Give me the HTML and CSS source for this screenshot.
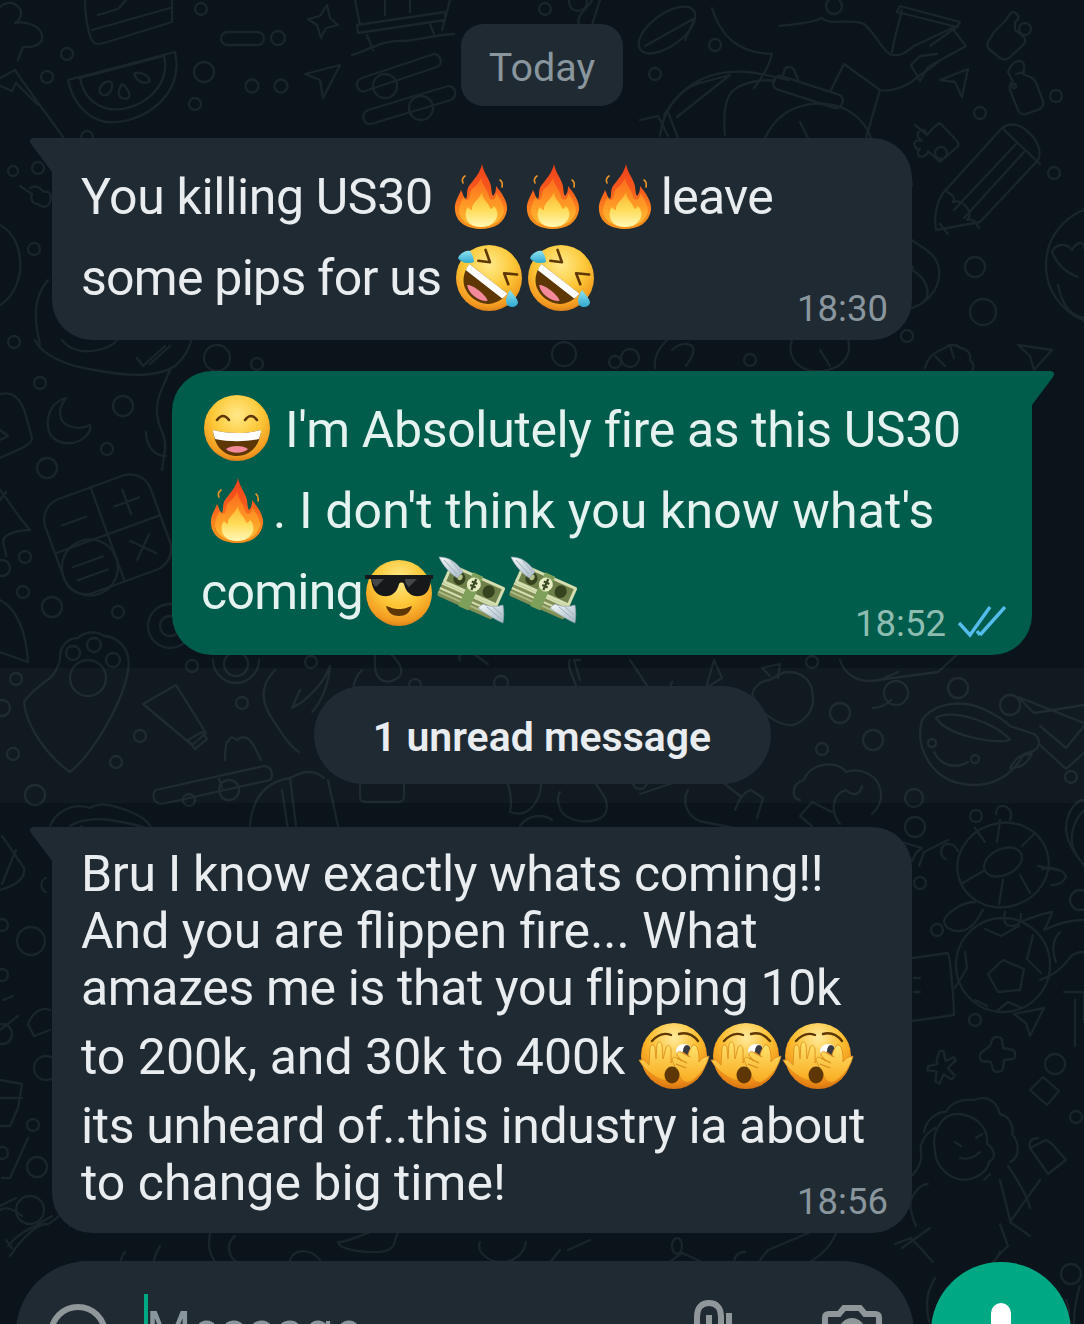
FILE: index.html
```html
<!DOCTYPE html>
<html lang="en">
<head>
<meta charset="utf-8">
<title>Chat</title>
<link rel="stylesheet" href="styles.css">
</head>
<body>
<svg class="sprite" aria-hidden="true">
  <defs>
    <radialGradient id="face" cx="50%" cy="30%" r="74%">
      <stop offset="0" stop-color="#ffe98a"/><stop offset=".5" stop-color="#fdc838"/><stop offset=".85" stop-color="#f29a20"/><stop offset="1" stop-color="#cf7416"/>
    </radialGradient>
    <radialGradient id="facehot" cx="50%" cy="22%" r="84%">
      <stop offset="0" stop-color="#ffeb9c"/><stop offset=".45" stop-color="#fdbd2e"/><stop offset=".8" stop-color="#ef8d18"/><stop offset="1" stop-color="#c9650f"/>
    </radialGradient>
    <linearGradient id="flame" x1="0" y1="0" x2="0" y2="1">
      <stop offset="0" stop-color="#f0401b"/><stop offset=".4" stop-color="#f65a1c"/><stop offset=".75" stop-color="#fb8a20"/><stop offset="1" stop-color="#f2901c"/>
    </linearGradient>
    <linearGradient id="flamemid" x1="0" y1="0" x2="0" y2="1">
      <stop offset="0" stop-color="#fb6a1c"/><stop offset=".6" stop-color="#ff9d26"/><stop offset="1" stop-color="#ffc23a"/>
    </linearGradient>
    <linearGradient id="flamein" x1="0" y1="0" x2="0" y2="1">
      <stop offset="0" stop-color="#ffb32e"/><stop offset=".5" stop-color="#ffdc58"/><stop offset="1" stop-color="#fff8b8"/>
    </linearGradient>
    <linearGradient id="hand" x1="0" y1="0" x2="0" y2="1">
      <stop offset="0" stop-color="#ffe36e"/><stop offset="1" stop-color="#f9aa1f"/>
    </linearGradient>
    <linearGradient id="tear" x1="0" y1="0" x2="0" y2="1">
      <stop offset="0" stop-color="#8fe3ee"/><stop offset="1" stop-color="#2fa8d0"/>
    </linearGradient>
    <linearGradient id="wing" x1="0" y1="0" x2="1" y2="1">
      <stop offset="0" stop-color="#f6fafc"/><stop offset="1" stop-color="#a3b7c3"/>
    </linearGradient>
    <symbol id="e-fire" viewBox="0 0 72 72">
      <path class="spark" d="M18 23q-2-4 2-7M55 20q3 2 2 7"/>
      <path fill="url(#flame)" d="M37 4c2 9 6 13 8 19 2 5 1 10 3 13 3-3 3-7 3-10 6 7 12 16 11 24-2 13-13 19-26 19S11 63 10 50c-1-8 4-14 6-20 2 3 2 7 5 9 2-4 0-9 3-13 4-6 11-12 13-22Z"/>
      <path fill="url(#flamemid)" d="M36 17c1 8 7 13 8 20 1 3 4 4 6 1 1-2 1-3 1-5 4 5 8 12 8 18-2 10-12 16-23 16s-21-6-22-16c0-5 2-10 5-14 1 3 3 4 5 2 2-3 0-6 3-10 3-3 8-6 9-12Z"/>
      <path fill="url(#flamein)" d="M37 32c0 7 6 10 8 16 1 2 3 0 4-2 3 3 4 7 3 11-2 6-8 10-16 10s-14-4-15-10c-1-4 0-7 2-10 1 2 3 3 4 3-1-7 8-11 10-18Z"/>
    </symbol>
    <symbol id="e-rofl" viewBox="0 0 72 72">
      <circle cx="36" cy="37" r="33" fill="url(#face)"/>
      <g transform="rotate(38 36 37)">
        <path fill="#5f3705" d="M12 38h48c0 15-10 25-24 25S12 53 12 38Z"/>
        <path fill="#fff" d="M12 38h48c0 3 0 5-1 7H13c-1-2-1-4-1-7Z"/>
        <path fill="#f28a9c" d="M23 56c4-4 22-4 26 0-7 6-19 6-26 0Z"/>
        <path class="eye" d="M16 17l11 7-10 6M56 17l-11 7 10 6"/>
      </g>
      <path fill="url(#tear)" d="M5 17c2-5 8-8 12-7 2 2 4 8 4 11-6 2-13 1-16-4Z"/>
      <path fill="url(#tear)" d="M57 49c3 4 7 8 8 12 0 3-3 5-6 5s-6-2-6-6 2-8 4-11Z"/>
    </symbol>
    <symbol id="e-grin" viewBox="0 0 72 72">
      <circle cx="36" cy="35" r="33" fill="url(#face)"/>
      <path class="eye" d="M16 27q6-8 12 0M44 27q6-8 12 0"/>
      <path fill="#5f3705" d="M12 37c15 4 33 4 48 0-1 16-11 26-24 26S13 53 12 37Z"/>
      <path fill="#fff" d="M12 37c15 4 33 4 48 0 0 3-1 6-2 9-14 3-30 3-44 0-1-3-2-6-2-9Z"/>
      <path fill="#f28a9c" d="M25 56c5-4 17-4 22 0-5 5-17 5-22 0Z"/>
    </symbol>
    <symbol id="e-cool" viewBox="0 0 72 72">
      <circle cx="36" cy="38" r="33" fill="url(#face)"/>
      <path fill="#17181a" d="M2 20h68v4h-2c-1 8-3 16-11 17-8 1-14-3-16-12-1-2-4-2-5 0-2 9-8 13-16 12-8-1-11-9-12-17H2v-4Z"/>
      <path fill="#44464a" d="M9 24h12l-8 8c-3-2-4-5-4-8ZM42 24h12l-8 8c-3-2-4-5-4-8Z"/>
      <path fill="#5f3705" d="M23 51c9 3 17 3 26 0-2 7-7 10-13 10s-11-3-13-10Z"/>
      <path fill="#fdc838" d="M25 50c7 3 15 3 22 0-2 3-6 4-11 4s-9-1-11-4Z"/>
    </symbol>
    <symbol id="e-money" viewBox="0 0 72 72">
      <g transform="rotate(24 36 37)">
        <rect x="6" y="34" width="60" height="20" rx="2" fill="#7f8f55"/>
        <rect x="6" y="40" width="60" height="2" fill="#d5deb0"/>
        <rect x="6" y="45" width="60" height="2" fill="#d5deb0"/>
        <rect x="6" y="49" width="60" height="2" fill="#aab884"/>
        <rect x="6" y="19" width="60" height="21" rx="2" fill="#d5deb0"/>
        <rect x="9" y="22" width="54" height="15" fill="#6d8049"/>
        <ellipse cx="20" cy="29.500" rx="6" ry="6.500" fill="#35431f"/>
        <ellipse cx="52" cy="29.500" rx="6" ry="6.500" fill="#35431f"/>
        <ellipse cx="20" cy="28" rx="2.500" ry="3" fill="#b6c28e"/>
        <rect x="30" y="18" width="11" height="37" fill="#7fa05a"/>
        <ellipse cx="35.500" cy="29" rx="7" ry="7" fill="#e6ecc4"/>
        <path stroke="#3a4a22" stroke-width="2.200" fill="none" d="M35.500 23v12M32.500 27h6M32.500 31h6"/>
      </g>
      <path fill="url(#wing)" stroke="#8fa3af" stroke-width=".6" d="M4 2c9 0 17 4 24 15l-6 6C15 18 8 11 4 2Z"/>
      <path class="feather" d="M9 5l13 14M16 6l9 10"/>
      <path fill="url(#wing)" stroke="#8fa3af" stroke-width=".6" d="M48 49c6 3 14 3 20 1 1 6 1 12 0 18-7-3-17-9-25-15Z"/>
      <path class="feather" d="M52 52l15 13M58 52l9 8"/>
    </symbol>
    <symbol id="e-hide" viewBox="0 0 72 72">
      <circle cx="36" cy="36" r="33" fill="url(#facehot)"/>
      <path class="brow" d="M14 21q9-10 19-6M41 14q11-3 19 7"/>
      <ellipse cx="46" cy="31" rx="8" ry="7" fill="#fff"/>
      <ellipse cx="49" cy="31" rx="4" ry="6" fill="#3a3a42"/>
      <path class="hand" d="M24 60C13 55 6 49 1 40l5 0 5 5 1-17c1-4 4-4 5 0l1 11 1-14c1-4 4-4 5 0l1 14 3-11c1-4 4-3 5 1v14l3-4c3-2 5 0 4 3l-3 13c-2 5-6 7-8 5Z"/>
      <path class="hand" d="M44 60c-3-5-7-11-8-16l-2-4c0-3 3-3 5-2l5 3-5-6c-1-3 2-4 4-3l7 4c0-3 2-7 4-10 1-2 4-1 5 1 2 5 2 10 2 15 2-3 4-4 6-5l4-1c-2 10-9 20-19 26-3 1-6 0-8-2Z"/>
      <path class="crease" d="M38 44l10 4M39 38l10 5M44 32l8 5"/>
      <ellipse cx="34" cy="55" rx="7.500" ry="8.500" fill="#5f3705"/>
    </symbol>
  </defs>
</svg>

<div class="screen">
  <svg class="doodles" viewBox="0 0 1084 1324" aria-hidden="true">
    <!-- top left -->
    <path d="M0 7C8 0 16 3 20 9c3 6-1 12-5 14 10-2 25 2 27 12 2 9-8 13-19 12L18 60M0 78l15-8 6 9L63 137M-2 85l14 6 4-8 22 22"/>
    <path d="M85 0c0 12 2 26 5 36 2 8 7 9 14 7l68-21V0M92 30l78-22M98 15l20-6 8-9"/>
    <circle cx="67" cy="54" r="6"/><circle cx="47" cy="77" r="6"/><circle cx="201" cy="9" r="6"/><circle cx="278" cy="38" r="7"/>
    <rect x="221" y="32" width="43" height="13" rx="6.5"/>
    <path d="M327 5l3 13 8 7-12 3-5 10-4-13-9-6 12-3Z"/>
    <path d="M68 80l107-28c10 42-31 73-69 70C85 118 72 100 68 80ZM80 78l84-22c8 30-24 57-55 53-15-3-26-14-29-31Z"/>
    <path d="M100 88c4-8 12-8 12-4 1 6-4 13-9 11-3-1-4-4-3-7ZM122 84c4 2 9 10 7 13-2 3-9 2-10-2-1-4 1-8 3-11ZM134 74c5-3 14 0 16 7-5 4-13 1-16-7Z"/>
    <circle cx="204" cy="72" r="10"/><circle cx="252" cy="86" r="6.5"/><circle cx="281" cy="86" r="6.5"/><circle cx="195" cy="104" r="6"/>
    <path d="M305 74l35-9-17 33-3-18Z"/>
    <path d="M355 0l5 25M450 0l-8 30M357 25l88-13 0 8-87 13ZM385 0v15M410 0v12M367 35l6 15M430 24l4 10M352 55c20-6 30-15 50-14 18 0 28-6 52-7"/>
    <path d="M362 78l72-24c6 0 10 10 3 13l-72 24c-8 2-12-10-3-13ZM368 110l80-24c8 0 10 10 3 14l-80 24c-8 1-11-10-3-14Z"/>
    <circle cx="385" cy="86" r="12"/><circle cx="421" cy="108" r="12"/>
    <!-- top right -->
    <ellipse cx="667" cy="30" rx="33" ry="16" transform="rotate(-36 667 30)"/>
    <path d="M645 46l50-28-10 22"/>
    <circle cx="715" cy="45" r="6"/><circle cx="655" cy="74" r="6"/><circle cx="545" cy="9" r="6"/><circle cx="578" cy="2" r="9"/>
    <path d="M600 0l-8 25-5 8M592 0c-5 10-18 15-12 28"/>
    <path d="M712 8c8 26 24 45 60 46-3 12-10 24-18 34M780 26c12-2 30-2 42-8 8 8 30 0 42 6 9 6 18 26 26 30 10 4 16-2 24-8"/>
    <circle cx="834" cy="6" r="8"/>
    <path d="M900 6l60 16-3 5-60-15ZM902 10c-5 20-8 30-10 42M958 26l-28 20"/>
    <path d="M914 46l38-18 14 18-38 21-8 14-9-16 9-9 17-2"/>
    <path d="M660 136c5-40 40-68 88-64 18 2 30 6 40 8M664 115c14-22 26-30 36-32l30-8-53 42M640 120l18-4 10 20M668 112l10 26"/>
    <path d="M725 135c-2-20 0-40 10-46 12-8 30-10 40-8"/>
    <rect x="772" y="85" width="72" height="14" rx="6" transform="rotate(18 808 92)"/>
    <path d="M782 78l2-6c0-6 8-6 10-2l4 10M830 92l14-28 36 26c8 2 24-2 34-10 6-6 18-12 24-18M880 90l-14 48M765 138c16-34 50-40 78-30 14 6 24 18 28 30M800 122l8 16"/>
    <path d="M964 32l12-12 4-6c2-3 7-2 8 2 1 3-1 5-3 6l0 8 8 6c3 3 3 6 0 9l-14 13c-3 2-6 2-9 0l-11-9c-3-4-2-7 1-10Z" transform="translate(30 0)"/>
    <circle cx="1025" cy="29" r="6"/>
    <path d="M1008 72c3-8 6-11 11-11 4 0 6 3 5 8l-1 5 9 4c3 2 4 3 5 7l6 16c1 4 0 6-3 8l-14 5c-4 1-6 0-8-4l-8-20c-1-4 0-7 3-8ZM1016 74l8-2"/>
    <circle cx="1014" cy="86" r="2"/>
    <path d="M940 80l28-11-6 28-7-15Z"/>
    <circle cx="1056" cy="96" r="6"/><circle cx="980" cy="113" r="6"/><circle cx="941" cy="153" r="6"/><circle cx="906" cy="184" r="6"/>
    <path d="M915 125l12 10 7-8 6-4 17 18c2 2 2 5 0 6l-17 15-12-11c0 3-4 6-7 6-4-1-4-6-1-8-4 1-7-4-5-7 2-2 5-2 7-1l-4-4c-2-6 5-9 8-5"/>
    <path d="M943 193l59-65c8-6 18-4 26 4 10 8 14 20 10 28l-58 62-44 8c-2-12 0-26 7-37Z M1002 128l38 36M1016 144l-62 66M1024 152l-60 66M945 190c4 4 12 6 8 12 10-4 22 12 14 18 8-2 10 6 12 8M940 224l8 10"/>
    <circle cx="1105" cy="265" r="59"/>
    <path d="M1052 252c3-8 14-10 20-2 4-8 12-10 12-2M1052 252c4 10 12 20 26 25M1058 285c4 20 12 30 26 33"/>
    <circle cx="975" cy="267" r="10"/><circle cx="983" cy="312" r="13"/><circle cx="907" cy="336" r="6"/><circle cx="1054" cy="173" r="6"/>
    <path d="M905 234c10 12 32 16 34 36 2 20-14 36-34 40M912 270c14 8 20 22 12 32M905 250c-2 8 5 12 8 18"/>
    <path d="M1018 345l34 5-18 20-4-14Z"/>
    <path d="M925 368c3-12 10-16 20-20 4-4 12-4 15 0 6 0 12 6 10 12 5 4 4 8 2 12M935 356l10 10M950 346l4 12"/>
    <circle cx="564" cy="354" r="12"/><circle cx="615" cy="362" r="6"/><circle cx="750" cy="360" r="6"/><circle cx="630" cy="358" r="9"/>
    <path d="M655 368c-2-14 8-24 14-30M672 350c6-6 14-8 20-4 4 6-2 14-6 20M792 340c-6 18 8 36 36 30 16-4 24-16 20-30M820 350l10 16"/>
    <!-- left column -->
    <circle cx="13" cy="171" r="5"/><circle cx="38" cy="168" r="6"/><circle cx="34" cy="249" r="6"/><circle cx="87" cy="137" r="6"/>
    <path d="M30 188c6-4 10 0 14 4 6-2 8 4 6 10-2 6-8 6-12 2-6 0-8-6-6-10l-12-8"/>
    <path d="M0 225c14 8 22 24 20 46-2 16-10 28-20 34M48 280c-12 14-16 32-8 64"/>
    <circle cx="14" cy="342" r="6"/>
    <path d="M35 340c6 14 30 26 60 30 30 6 62 8 80-4 12-10 16-22 18-32M62 340c6 8 18 14 36 10 8-2 16-4 22-14"/>
    <path d="M137 358l6 8 22-20M150 364l20-18"/>
    <circle cx="40" cy="383" r="6"/><circle cx="123" cy="406" r="10"/><circle cx="107" cy="449" r="6"/><circle cx="47" cy="468" r="10"/><circle cx="217" cy="358" r="13"/><circle cx="257" cy="364" r="6"/>
    <path d="M66 398c-16 4-22 22-16 36 8 12 26 12 36 2 4-4 5-8 4-11-12 6-30 2-30-12 0-6 2-10 6-15Z"/>
    <path d="M0 394c10-2 20 0 26 22l6 22c0 8-20 14-32 20M0 430l8 6-8 4"/>
    <path d="M170 370c-8 20-16 30-12 50 2 10 10 18 6 36M146 432c0 14 8 24 20 24M164 456l-2 14"/>
    <g transform="rotate(-20 105 530)">
      <rect x="50" y="485" width="112" height="100" rx="22"/>
      <path d="M106 485v100M50 535h112M66 511h26M122 511h26M135 498v26M125 549l20 20M145 549l-20 20"/>
      <circle cx="78" cy="560" r="28"/>
      <path d="M62 554h32M62 568h32"/>
    </g>
    <path d="M0 490c8 10 16 24 30 40-10 0-18 2-24 6-6 4 0 14 0 20M0 500l6-8"/>
    <circle cx="2" cy="568" r="8"/><circle cx="25" cy="557" r="6"/><circle cx="23" cy="592" r="6"/><circle cx="52" cy="607" r="10"/><circle cx="118" cy="612" r="6"/>
    <path d="M0 600c16 8 26 30 28 62L0 652"/>
    <circle cx="170" cy="626" r="22"/><circle cx="170" cy="626" r="10"/>
    <path d="M213 660a23 23 0 1 0 46 0"/><circle cx="236" cy="664" r="12"/>
    <circle cx="192" cy="666" r="6"/><circle cx="311" cy="662" r="6"/>
    <path d="M60 660c-1-14 8-22 18-22 6-6 18-8 26-2 8 0 20 6 24 20 6 28-32 96-58 116-20-14-44-44-46-70 6-10 18-18 26-24 4-4 8-10 10-18Z"/>
    <circle cx="73" cy="653" r="7"/><circle cx="94" cy="645" r="7"/><circle cx="113" cy="660" r="7"/><circle cx="88" cy="678" r="18"/>
    <circle cx="16" cy="679" r="6"/><circle cx="2" cy="708" r="8"/><circle cx="140" cy="736" r="6"/><circle cx="13" cy="754" r="6"/><circle cx="116" cy="762" r="6"/><circle cx="35" cy="795" r="10"/><circle cx="189" cy="800" r="6"/><circle cx="229" cy="790" r="10"/><circle cx="242" cy="703" r="6"/>
    <path d="M143 704l33-19 30 48-14 12ZM188 740l14-8 5 7-12 10Z"/>
    <path d="M156 790l108-24c8 0 10 10 6 14l-108 24c-10 0-10-12-6-14ZM218 776l4 12M225 760c0-8 0-14 2-18 4-2 2-8 10-2 10-8 16 4 18 8l6 12"/>
    <path d="M50 826c6-14 22-24 40-18 12-8 28 0 36 2 16 6 24 12 28 24M70 826c10-6 24-8 40-6 12 2 24 4 36 8M82 826l-4 4"/>
    <path d="M275 670c-14 14-16 30-2 50 8 12 16 26 26 32M300 690l-8 18 10-6c12-10 22-20 28-36-2 24-12 40-18 46M250 826c2-26 14-44 40-48l6 48M290 778c12-6 22-10 34 0M282 790l6 40M338 826l-10-46"/>
    <rect x="360" y="752" width="44" height="50" rx="5"/>
    <path d="M375 660c-2-16 10-20 14-8 6 6 14 14 12 22-2 6-22 16-26-6ZM362 670c-6 6-14 22-4 30"/>
    <circle cx="501" cy="683" r="7"/><circle cx="415" cy="685" r="6"/><circle cx="640" cy="782" r="7"/><circle cx="896" cy="693" r="12"/>
    <path d="M500 760c6 20 14 34 10 52 16 6 26-6 30-20 4-18-4-26-4-38M460 660c-4-6 8-14 14-6l14 10M570 660c-4 6 4 18 6 26M580 660l-6 0 6 20M630 660l20 30c6 8 20 2 22-8"/>
    <path d="M628 748l-6 20 58-16 14 24-54 18M560 792c-4 6-2 22 10 26 12 6 32 4 36-6 4-14-8-22-12-32M520 826c8-12 24-12 32-6M688 790c-8 14 2 30 16 32l30 6M720 780l20 16M735 810c4-10 8-18 16-20l12 8-6 20"/>
    <path d="M714 660l-8 28 16-10ZM812 826l-12-10 12-14 20 10"/>
    <path d="M770 680c-10 0-16 8-18 14l8 16c12 10 26 18 36 14 12-6 20-16 16-34-2-10-10-18-24-18-6 0-12 4-18 8ZM770 676l-8-8 18-4-2 14"/>
    <!-- right column -->
    <path d="M840 660c4 14 18 24 38 20l60-8 22-20M880 680l18-8"/>
    <circle cx="812" cy="662" r="6"/><circle cx="840" cy="713" r="10"/><circle cx="873" cy="740" r="10"/><circle cx="822" cy="749" r="6"/><circle cx="958" cy="688" r="10"/><circle cx="1010" cy="705" r="10"/><circle cx="1071" cy="777" r="6"/><circle cx="914" cy="798" r="9"/><circle cx="915" cy="827" r="10"/><circle cx="976" cy="816" r="6"/><circle cx="920" cy="883" r="6"/><circle cx="937" cy="930" r="6"/><circle cx="975" cy="1020" r="6"/><circle cx="1055" cy="1064" r="10"/><circle cx="1076" cy="1117" r="6"/><circle cx="1080" cy="900" r="10"/>
    <path d="M873 708c8 0 14-4 18-8"/>
    <path d="M922 720c10-14 28-18 44-16 16 2 36 14 44 22l24 8c8 6 6 16-4 18l-6 2c-14 26-38 34-60 30-30-4-50-34-42-64ZM936 718c14-10 60 4 74 22-16 4-62-4-74-22Z"/>
    <circle cx="932" cy="743" r="4"/><circle cx="975" cy="759" r="4"/>
    <path d="M934 752c8 16 24 16 34 10M1010 768c6-10 10-14 22-14-6 10-10 14-22 14Z"/>
    <path d="M1040 726l26 22 18-22M1084 705l-50 8-16-16 66 26M1040 745l26 24 18-16"/>
    <path d="M800 800c-8 0-10-16 4-20 6-18 34-20 42-8 10-4 30 0 34 16 4 14-4 22-8 26M846 790c-14 4-16 22-6 34M862 786c-2 10-10 10-16 4"/>
    <path d="M918 840l-27-8 17 21 4-8ZM915 858l5-14 24-12" transform="translate(4 8)"/>
    <path d="M1084 800c-12 0-24 24-14 44 4 10 14 20 14 22M1084 810c-8 8-18 26-8 44"/>
    <!-- turtle -->
    <ellipse cx="1003" cy="865" rx="46" ry="42" transform="rotate(-18 1003 865)"/>
    <ellipse cx="1003" cy="862" rx="20" ry="13" transform="rotate(-25 1003 862)"/>
    <path d="M985 842l-10-14M1022 846l12-12M1020 875l10 18M1003 880l-4 24M985 870l-24 14M1000 820l-3 22M1038 866l20 4"/>
    <path d="M1010 820c2-4 2-8-2-12-6-4-12-2-12 6M975 902c-12 0-24 8-30 16-4 8 8 16 20 12 10-4 14-14 18-20M1052 885c8 0 12-4 14-8-2-8-14-10-24-8M1005 912c-2 10 0 14 8 14 6 0 8-6 8-12M958 851c-4-8-10-8-14-6-4 4-4 12 2 14"/>
    <!-- ball -->
    <circle cx="1003" cy="965" r="47"/>
    <path d="M1003 960l21 9-4 21-22 2-10-18ZM985 929l16 7 18-10M1033 935l-6 24 14 14M965 952l2 16-12 20M998 1010l10-8 14 6M975 1000l12 6"/>
    <path d="M1020 922c10-4 20-8 32-10-2 8-6 14-8 18 12-6 26-10 40-10M1040 980c12-4 22-12 28-20 4-6 8-8 16-8M1060 932c-8 8-8 20-4 30"/>
    <path d="M913 958l35-5c2 0 6 50 6 62l-42 6M914 978l6 0M914 992l6 0"/>
    <path d="M1014 1014l30-6-14 28-4-13ZM1064 992h20v30M1075 1000v46"/>
    <path d="M922 1056l3-10 4 0 2 10 8-4 2 3-8 8 7 7-3 4-8-5-4 9-4-2 1-10-9-1 1-4 9-2Z" transform="translate(-4 -16) scale(1.02)"/>
    <path d="M990 1046l2-6c2-4 8-4 10-1l1 9 10 2c3 2 3 8 0 9l-9 1-1 9c-1 3-8 4-10 1l-2-8-9-1c-3-2-3-7 0-9Z"/>
    <path d="M1030 1090l13-13 16 14-12 14ZM1030 1148l16-8 6 4 14 16-18 14-18-26M1030 1148c-2-6 2-10 8-10"/>
    <path d="M924 1132c2-12 12-20 22-20 4-8 14-14 28-12 10-4 22-2 26 14 10 2 14 14 12 20 6 6 10 22-2 28M935 1150c-4-20 8-36 22-36 16 0 32 12 30 30 4 2 12 12 2 18-2 12-20 22-34 16-10-4-20-14-20-28Z"/>
    <path d="M935 1128c-10 6-16 16-14 24 2 10-6 22-12 26M955 1142l6 4M982 1134l-6 4M960 1158c6 2 14 0 20-6M984 1180l6-6M1000 1180l10 40M1030 1208c-2-12-14-30-22-42"/>
    <path d="M1000 1224l8 22-10 10M1040 1180l-30 42 20 14"/>
    <path d="M916 1226c-6-14-8-24-2-32 4-6 8-10 14-10M895 1244l16-6 22 24M840 1224c-8 24-22 36-40 42M930 1228l-28 20"/>
    <circle cx="1071" cy="1274" r="10"/>
    <path d="M935 1278c-8 14-10 24-6 44M1000 1252c-6 14-22 22-30 18M1066 1300c4 8 4 16 0 24M1080 1286c-4 12-6 26-6 38"/>
    <!-- lower strip -->
    <path d="M125 1252c-8 10-6 26 2 32M160 1246c-8 12-10 32-2 40M210 1234c-2 10 0 20 4 26 8 14 20 20 36 10M235 1236c-10 8-6 22 2 26M340 1242c10 0 52-20 62-22l0 8c-10 8-4 18-14 22-10 4-48 2-50-8M320 1260c-6-8-18-12-26-6-6 6-6 14 0 18M480 1242c-4 10 8 20 22 20 12 0 22-8 24-20M560 1250l-18 22M590 1240l-22 10M700 1261l-18-8-14 10M745 1252c-8 0-12 6-10 12M768 1250l62-26M768 1250c-4 6-8 8-8 12"/>
    <ellipse cx="677" cy="1246" rx="5" ry="8"/>
    <path d="M8 1246c8-10 24-22 40-22 6-2 14-12 22-18l8 6-8 14M38 1224l14-8M40 1226c-10 4-24 20-30 30M0 1210c6-4 16 0 22 6M6 1240l6 8"/>
    <circle cx="30" cy="1210" r="14"/>
    <path d="M0 1206l16-8M28 1138l-18 40-8 0M0 1080l22 4-4 24-8 18-10 0M0 1098h22M0 1030l18-14M3 1000l10-4"/>
    <circle cx="2" cy="925" r="6"/><circle cx="31" cy="941" r="14"/><circle cx="2" cy="975" r="6"/><circle cx="2" cy="1034" r="10"/><circle cx="46" cy="1068" r="12"/><circle cx="33" cy="1125" r="6"/><circle cx="2" cy="1153" r="6"/><circle cx="37" cy="1167" r="10"/>
    <path d="M2 836l22 32c2 12-10 18-24 22M16 850l-14 34M46 878c-6 2-6 12 0 14M50 1010c-10-4-18 4-22 14l6 12 16-6"/>
  </svg>

  <main class="chat">
    <div class="date-row"><span class="date-pill">Today</span></div>

    <article class="bubble bubble-in bubble-first">
      <div class="line">You killing US30 <svg class="emoji"><use href="#e-fire"/></svg><svg class="emoji"><use href="#e-fire"/></svg><svg class="emoji"><use href="#e-fire"/></svg><span class="narrow">leave</span></div>
      <div class="line"><span class="narrow">some pips for us</span> <svg class="emoji"><use href="#e-rofl"/></svg><svg class="emoji"><use href="#e-rofl"/></svg></div>
      <span class="meta">18:30</span>
    </article>

    <article class="bubble bubble-out">
      <div class="line"><svg class="emoji"><use href="#e-grin"/></svg> I'm Absolutely fire as this US30</div>
      <div class="line"><svg class="emoji"><use href="#e-fire"/></svg><span class="loose">. I don't think you know what's</span></div>
      <div class="line"><span class="narrow">coming</span><svg class="emoji"><use href="#e-cool"/></svg><svg class="emoji"><use href="#e-money"/></svg><svg class="emoji"><use href="#e-money"/></svg></div>
      <span class="meta meta-out">18:52
        <svg class="ticks" viewBox="0 0 48 32"><path d="M1 17l11 12L32 1M22 29L47 1M19 25l3 4"/></svg>
      </span>
    </article>

    <div class="unread-band"><span class="unread-pill">1 unread message</span></div>

    <article class="bubble bubble-in bubble-tight">
      <div class="line-s">Bru I know exactly whats coming!!</div>
      <div class="line-s"><span class="plain">And you are flippen fire... What</span></div>
      <div class="line-s">amazes me is that you flipping 10k</div>
      <div class="line"><span class="plain">to 200k, and 30k to 400k</span> <svg class="emoji"><use href="#e-hide"/></svg><svg class="emoji"><use href="#e-hide"/></svg><svg class="emoji"><use href="#e-hide"/></svg></div>
      <div class="line-s">its unheard of..this industry ia about</div>
      <div class="line-s"><span class="plain">to change big time!</span></div>
      <span class="meta">18:56</span>
    </article>

    <div class="composer">
      <div class="field">
        <svg class="icon icon-smile" viewBox="0 0 60 60"><circle cx="30" cy="30" r="27"/><path d="M20 22v8M40 22v8"/></svg>
        <div class="input"><span class="caret"></span><span class="placeholder">Message</span></div>
        <svg class="icon icon-clip" viewBox="0 0 40 40"><path d="M4 40V18C4 8 9 4 16 4s12 4 12 14v22M16 16v24M36 14v26"/></svg>
        <svg class="icon icon-camera" viewBox="0 0 60 40"><path d="M3 40V13c0-3 1-4 4-4h10l5-6h16l5 6h10c3 0 4 1 4 4v27"/><path d="M20 26a10 10 0 0 1 20 0"/></svg>
      </div>
      <div class="fab"><span class="mic"></span></div>
    </div>
  </main>
</div>
</body>
</html>
```
FILE: styles.css
```css
* { box-sizing: border-box; }
html, body { margin: 0; padding: 0; background: #0a141a; }
.sprite { position: absolute; width: 0; height: 0; }
.spark { fill: none; stroke: #e8922a; stroke-width: 1.6; stroke-linecap: round; }
.eye { fill: none; stroke: #5f3705; stroke-width: 2.6; stroke-linecap: round; stroke-linejoin: round; }
.brow { fill: none; stroke: #5f3705; stroke-width: 2.4; stroke-linecap: round; }
.hand { fill: url(#hand); stroke: #d9891c; stroke-width: .8; }
.crease { fill: none; stroke: #d88a1c; stroke-width: 1.2; }
.feather { fill: none; stroke: #9fb2be; stroke-width: 1; }

.screen {
  position: relative;
  width: 1084px;
  height: 1324px;
  overflow: hidden;
  background: #0a141a;
  font-family: Roboto, "Noto Sans", sans-serif;
  color: #e9edef;
}
.doodles {
  position: absolute;
  inset: 0;
  width: 1084px;
  height: 1324px;
  fill: none;
  stroke: #1a252b;
  stroke-width: 2.3;
  stroke-linecap: round;
  stroke-linejoin: round;
}
.chat {
  position: relative;
  display: flex;
  flex-direction: column;
  padding-top: 24px;
}
.date-row { display: flex; justify-content: center; margin-bottom: 32px; }
.date-pill {
  width: 162px;
  height: 82px;
  border-radius: 22px;
  background: #1f2a32;
  color: #8a969e;
  font-size: 39.5px;
  line-height: 87px;
  text-align: center;
}
.bubble {
  position: relative;
  width: 860px;
  font-size: 50px;
  font-weight: 400;
  letter-spacing: -0.35px;
}
.narrow { letter-spacing: -0.75px; }
.loose { letter-spacing: 0.15px; }
.plain { letter-spacing: 0; }
.bubble-in {
  margin-left: 52px;
  background: #1f2a32;
  border-radius: 0 40px 40px 40px;
  padding: 19px 30px 21px 29px;
  color: #e9edef;
}
.bubble-in::before, .bubble-out::before {
  content: "";
  position: absolute;
  top: 0;
  width: 24px;
  height: 34px;
}
.bubble-in::before {
  left: -22px;
  background: #1f2a32;
  clip-path: path("M3 0H24V34H22L1 6Q-2 1 3 0Z");
}
.bubble-first { margin-bottom: 31px; }
.bubble-out {
  margin-left: 172px;
  background: #005c4b;
  border-radius: 40px 0 40px 40px;
  padding: 19px 30px 0 29px;
  height: 284px;
  color: #e4f3ef;
}
.bubble-out::before {
  right: -22px;
  background: #005c4b;
  clip-path: path("M21 0H0V34H2L23 6Q26 1 21 0Z");
}
.bubble-tight { margin-bottom: 28px; }
.line { height: 81px; line-height: 81px; white-space: nowrap; }
.line-s { height: 57px; line-height: 57px; white-space: nowrap; }
.emoji { width: 72px; height: 72px; vertical-align: -18px; }
.meta {
  position: absolute;
  right: 24px;
  bottom: 10px;
  font-size: 36.5px;
  letter-spacing: 0;
  line-height: 42px;
  color: #8a969e;
}
.meta-out {
  right: 26px;
  bottom: 10px;
  display: flex;
  align-items: center;
  gap: 12px;
  color: #8dbdb1;
}
.ticks {
  width: 48px;
  height: 32px;
  margin-top: -4px;
  fill: none;
  stroke: #53bdeb;
  stroke-width: 3.4;
}
.unread-band {
  display: flex;
  justify-content: center;
  margin: 13px 0 24px;
  padding: 18px 0 19px;
  background: rgba(255, 255, 255, 0.028);
}
.unread-pill {
  width: 457px;
  height: 98px;
  border-radius: 49px;
  background: #1f2a32;
  color: #e9edef;
  font-size: 41px;
  font-weight: 600;
  line-height: 103px;
  text-align: center;
}
.composer {
  display: flex;
  gap: 17px;
  margin-left: 16px;
}
.field {
  display: flex;
  align-items: flex-start;
  width: 898px;
  height: 144px;
  border-radius: 72px;
  background: #1f2a32;
  color: #8a969e;
}
.icon {
  fill: none;
  stroke: #8f979b;
  stroke-width: 6;
  flex: none;
}
.icon-smile { width: 60px; height: 60px; margin: 43px 0 0 32px; }
.input { display: flex; flex: 1; margin-left: 36px; }
.caret { width: 4px; height: 60px; margin-top: 33px; background: #00a884; }
.placeholder { margin: 40px 0 0 -2px; font-size: 52px; letter-spacing: 0.7px; line-height: 60px; }
.icon-clip { width: 40px; height: 40px; margin: 38px 0 0 0; }
.icon-camera { width: 60px; height: 40px; margin: 44px 32px 0 89px; }
.fab {
  display: flex;
  justify-content: center;
  width: 140px;
  height: 140px;
  margin-top: 1px;
  border-radius: 50%;
  background: #00a884;
  flex: none;
}
.mic {
  width: 20px;
  height: 60px;
  margin-top: 41px;
  border-radius: 10px;
  background: #fff;
}
```
